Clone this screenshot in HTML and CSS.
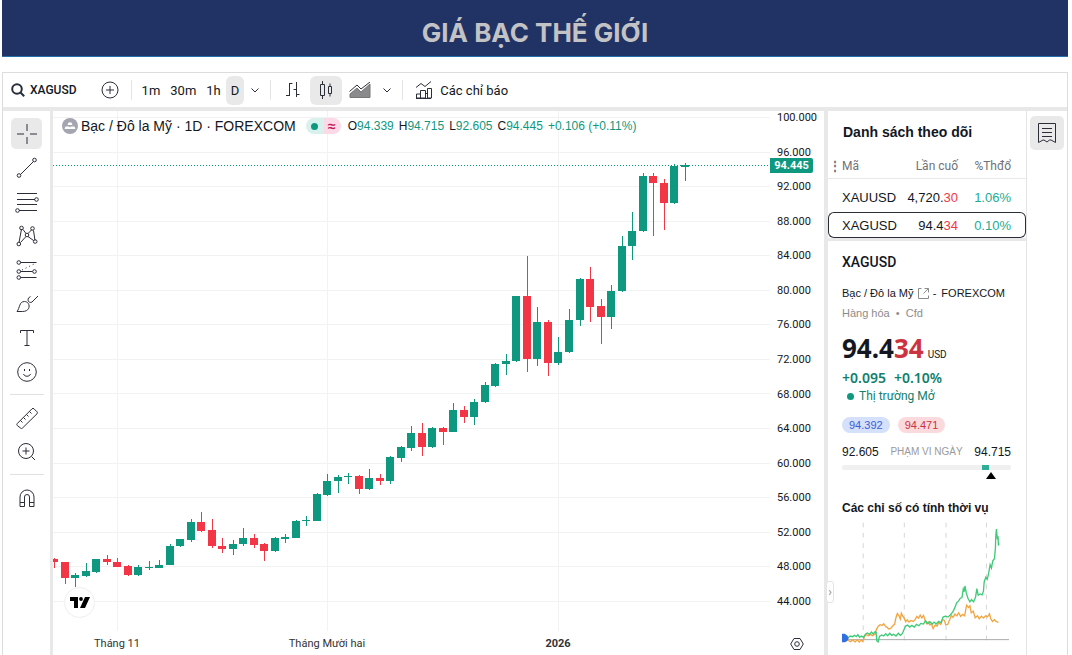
FILE: index.html
```html
<!DOCTYPE html>
<html lang="vi">
<head>
  <meta charset="utf-8">
  <title>Giá bạc thế giới</title>
  <link rel="stylesheet" href="styles.css">
</head>
<body>
  <header class="banner">
    <h1>GIÁ BẠC THẾ GIỚI</h1>
  </header>

  <main class="widget">
    <!-- Top toolbar -->
    <div class="topbar">
      <button class="symbol-btn">
        <svg width="14" height="14" viewBox="0 0 14 14"><circle cx="6" cy="6" r="4.8"/><path d="M9.5 9.5L13.2 13.2"/></svg>
        XAGUSD
      </button>
      <button class="add-btn" aria-label="Thêm mã">
        <svg width="18" height="18" viewBox="0 0 18 18"><circle cx="9" cy="9" r="8"/><path d="M9 5v8M5 9h8"/></svg>
      </button>
      <span class="divider"></span>
      <div class="intervals">
        <button>1m</button>
        <button>30m</button>
        <button>1h</button>
        <button class="active">D</button>
      </div>
      <button class="arrow" aria-label="Khung thời gian">
        <svg width="8" height="5" viewBox="0 0 8 5"><path d="M.5.5L4 4 7.5.5"/></svg>
      </button>
      <span class="divider"></span>
      <div class="styles">
        <button aria-label="Thanh">
          <svg width="15" height="16" viewBox="0 0 15 16"><path d="M4.5 1v13M4.5 1.5h3M1 13.5h3.500M11.500 0v15M8.500 7.500h3M11.500 12.500h3"/></svg>
        </button>
        <button class="active" aria-label="Nến">
          <svg width="14" height="18" viewBox="0 0 14 18"><path d="M1.500 3.500h4v11h-4zM3.500 0v3.500M3.500 14.500V18M9.500 5.500h3v7h-3zM11 2.500v3M11 12.500v3"/></svg>
        </button>
        <button aria-label="Vùng">
          <svg width="22" height="16" viewBox="0 0 22 16">
            <path class="area" d="M1 15.500V12l7-6 4 4 9-8v13.500z"/>
            <path d="M.500 9.500L8 3l4 4 9-7"/>
          </svg>
        </button>
      </div>
      <button class="arrow" aria-label="Kiểu biểu đồ">
        <svg width="8" height="5" viewBox="0 0 8 5"><path d="M.5.5L4 4 7.5.5"/></svg>
      </button>
      <span class="divider"></span>
      <button class="indicator-btn">
        <svg width="18" height="18" viewBox="0 0 18 18"><path d="M1 6.500l5-4 4 3 6-5M1.500 17v-4h4v4zM5.500 17V9.500h5V17zM10.500 12.500h2M12.500 17V7.500h4V17zM1 17.500h15"/></svg>
        Các chỉ báo
      </button>
    </div>

    <div class="workspace">
      <!-- Drawing tools -->
      <div class="tools">
        <button class="active" aria-label="Con trỏ">
          <svg width="22" height="22" viewBox="0 0 22 22"><path d="M11 1v7M11 14v7M1 11h7M14 11h7"/></svg>
        </button>
        <button aria-label="Đường xu hướng">
          <svg width="22" height="22" viewBox="0 0 22 22"><path d="M4.500 17.500l13-13"/><circle cx="3" cy="18.500" r="1.800"/><circle cx="18.500" cy="3" r="1.800"/></svg>
        </button>
        <button aria-label="Fibonacci">
          <svg width="24" height="22" viewBox="0 0 24 22"><path d="M2 2.500h20M2 8.500h18M2 13.500h20M4 19.500h18"/><circle cx="21.500" cy="8.500" r="1.800"/><circle cx="2.500" cy="19.500" r="1.800"/></svg>
        </button>
        <button aria-label="Mẫu hình">
          <svg width="22" height="22" viewBox="0 0 22 22"><path d="M3 17.500L5.500 4M7 4.500l3 4M12 8.500l4-4M17.500 5.500l1.500 10M4.500 17.500l5.500-6M12 11.500l5.500 4"/><circle cx="2.800" cy="19" r="1.800"/><circle cx="5.500" cy="3" r="1.800"/><circle cx="11" cy="10" r="1.800"/><circle cx="16.500" cy="3.500" r="1.800"/><circle cx="19.200" cy="16.500" r="1.800"/></svg>
        </button>
        <button aria-label="Dự báo">
          <svg width="22" height="22" viewBox="0 0 22 22"><path d="M4.500 3.500h16M4.500 12.500h12M4.500 18.500h16"/><path class="dots" d="M6 11L20 4"/><circle cx="2.800" cy="3.500" r="1.800"/><circle cx="2.800" cy="12.500" r="1.800"/><circle cx="18.500" cy="12.500" r="1.800"/><circle cx="2.800" cy="18.500" r="1.800"/></svg>
        </button>
        <button aria-label="Cọ vẽ">
          <svg width="24" height="22" viewBox="0 0 24 22"><path d="M2 18.500C5 15 4 8.500 9.500 8.500c6 0 7 10-2 10zM13.500 5c-1.500 3 1 5.500 3.500 4l6-6M13.500 5l2-1.500"/></svg>
        </button>
        <button aria-label="Văn bản">
          <svg width="22" height="22" viewBox="0 0 22 22"><path d="M4.500 6V3.500h13V6M11 3.500v15M8.500 18.500h5"/></svg>
        </button>
        <button aria-label="Biểu tượng">
          <svg width="22" height="22" viewBox="0 0 22 22"><circle cx="11" cy="11" r="9.300"/><path d="M7.500 13c1 3 6 3 7 0M8.500 8v2M13.500 8v2"/></svg>
        </button>
        <hr>
        <button aria-label="Thước đo">
          <svg width="24" height="24" viewBox="0 0 24 24"><path d="M2.300 17.500L17 2.800q1-1 2 0l3 3q1 1 0 2L7.500 22q-1 1-2 0l-3.200-2.500q-1-1 0-2zM5.500 14.500l2 2M8.500 11.500l2 2M11.500 8.500l2 2M14.500 5.500l2 2"/></svg>
        </button>
        <button aria-label="Phóng to">
          <svg width="22" height="22" viewBox="0 0 22 22"><circle cx="10" cy="10" r="7.500"/><path d="M10 6.500v7M6.500 10h7M15.500 15.500l3.500 3.500"/></svg>
        </button>
        <hr>
        <button aria-label="Nam châm">
          <svg width="22" height="22" viewBox="0 0 22 22"><path d="M4 19.500V10a7 7 0 0 1 14 0v9.500h-4.500V10a2.500 2.500 0 0 0-5 0v9.500zM4 15.500h4.500M13.500 15.500H18"/></svg>
        </button>
      </div>

      <!-- Candle chart -->
      <section class="chart">
        <svg class="plot" id="plot">
          <g id="grid"></g>
          <line class="price-line" x1="0" x2="100%" y1="54.500" y2="54.500"/>
          <g id="candles"></g>
          <text x="64" y="536">Tháng 11</text>
          <text x="274" y="536">Tháng Mười hai</text>
          <text x="505" y="536" class="year">2026</text>
        </svg>
        <div class="axis">
          <div class="axis-prices" id="prices"></div>
          <span class="price-tag">94.445</span>
          <button class="axis-settings" aria-label="Cài đặt">
            <svg width="14" height="14" viewBox="0 0 14 14"><path d="M4 1.500h6L13.300 7 10 12.500H4L.700 7z"/><circle cx="7" cy="7" r="2.300"/></svg>
          </button>
        </div>
        <div class="legend">
          <svg class="coin" width="16" height="16" viewBox="0 0 16 16"><circle class="disc" cx="8" cy="8" r="8"/><path class="bars" d="M5.500 7L6.500 4.500h3l1 2.500zM2.500 11l1-2.500h3.700l.8 1 .8-1h3.700l1 2.500z"/></svg>
          <span class="name">Bạc / Đô la Mỹ · 1D · FOREXCOM</span>
          <span class="status"><i></i><b>≈</b></span>
          <span class="ohlc">
            <span>O<em>94.339</em></span>
            <span>H<em>94.715</em></span>
            <span>L<em>92.605</em></span>
            <span>C<em>94.445</em></span>
            <span><em>+0.106 (+0.11%)</em></span>
          </span>
        </div>
        <a class="tv-logo" href="#" aria-label="TradingView">
          <svg width="20" height="12" viewBox="0 0 20 12"><path d="M0 0h8v11H4V4H0z"/><circle cx="11" cy="2" r="1.900"/><path d="M15 0h5l-5 11h-5z"/></svg>
        </a>
      </section>

      <!-- Watchlist and symbol details -->
      <aside class="side">
        <section class="watchlist">
          <h2>Danh sách theo dõi</h2>
          <table>
            <thead>
              <tr><th><span class="grip">⋮</span>Mã</th><th>Lần cuố</th><th>%Thđổ</th></tr>
            </thead>
            <tbody>
              <tr><td>XAUUSD</td><td>4,720.<span class="down">30</span></td><td class="up">1.06%</td></tr>
              <tr class="selected"><td>XAGUSD</td><td>94.4<span class="down">34</span></td><td class="up">0.10%</td></tr>
            </tbody>
          </table>
        </section>
        <section class="details">
          <h2>XAGUSD</h2>
          <p class="full-name">
            <a href="#">Bạc / Đô la Mỹ
              <svg width="13" height="13" viewBox="0 0 13 13"><path d="M4.500 1.500h-3v10h10v-3M7.500 1.500h4v4M11.500 1.500L6.500 6.500"/></svg>
            </a>
            <span class="dash">-</span> FOREXCOM
          </p>
          <p class="kind">Hàng hóa&nbsp; •&nbsp; Cfd</p>
          <p class="price">94.4<span>34</span><small>USD</small></p>
          <p class="change"><span>+0.095</span><span>+0.10%</span></p>
          <p class="market"><i></i>Thị trường Mở</p>
          <div class="quotes">
            <span class="bid">94.392</span>
            <span class="ask">94.471</span>
          </div>
          <div class="range">
            <span>92.605</span><span class="range-label">PHẠM VI NGÀY</span><span>94.715</span>
          </div>
          <div class="range-bar">
            <div class="range-fill"></div>
            <div class="range-mark"></div>
          </div>
          <h3>Các chỉ số có tính thời vụ</h3>
          <svg class="seasonal" viewBox="66 66 510 390">
            <path class="split" d="M130 68v370M254 68v370M380 68v370M502 68v370"/>
            <path class="base" d="M68 421h502"/>
            <polyline class="last-year" points="72,416 82,422 92,427 98,422 106,428 112,421 118,428 124,423 129,427 134,411 140,406 146,409 152,405 158,409 166,404 170,390 175,381 181,376 187,378 192,373 197,381 202,384 207,389 213,387 219,380 225,374 228,358 233,342 238,349 242,359 245,341 250,351 254,357 258,367 263,361 268,368 274,363 281,366 287,360 292,351 297,356 302,347 307,355 312,348 316,360 321,373 327,368 331,377 336,373 341,388 347,377 353,380 358,370 364,375 369,360 375,363 379,376 385,375 391,361 396,348 401,354 407,344 413,349 418,340 424,351 430,345 436,349 442,317 448,324 452,319 456,340 462,335 468,355 475,349 480,358 487,350 493,356 499,349 505,352 511,343 515,358 520,366 526,361 531,366 538,369"/>
            <polyline class="this-year" points="72,416 83,416 91,410 98,412 104,408 109,412 114,406 119,414 125,410 131,414 137,404 143,401 149,405 155,398 160,404 166,397 169,399 171,425 175,428 179,411 186,407 192,410 198,403 204,409 210,402 216,408 222,405 229,410 236,402 242,408 248,403 253,391 258,380 264,377 270,383 277,378 284,383 291,375 298,379 304,372 312,374 318,364 325,373 331,367 338,374 344,368 350,374 358,366 365,370 371,353 378,350 386,353 393,346 400,338 406,326 412,310 418,304 423,296 428,294 432,268 435,276 437,259 441,280 446,296 452,307 457,300 463,307 469,293 473,267 477,287 483,283 489,286 493,274 495,247 500,233 504,239 508,224 513,195 517,205 521,183 526,177 529,145 530,110 532,87 535,119 537,109 538,137 540,130"/>
            <path class="start" d="M66 403h8q10 4 12 13-2 10-12 13h-8z"/>
          </svg>
        </section>
        <button class="collapse" aria-label="Thu gọn">›</button>
      </aside>

      <nav class="rail">
        <button class="active" aria-label="Danh sách theo dõi">
          <svg width="20" height="22" viewBox="0 0 20 22"><path d="M1.500 1.500h17v19L14 18h-1.500L10 20l-3-2H6l-4.500 2.500zM5 6.500h10M5 10.500h10M5 14.500h10"/></svg>
        </button>
      </nav>
    </div>
  </main>

  <script src="chart.js"></script>
</body>
</html>
```

FILE: styles.css
```css
* {
  box-sizing: border-box;
}
body {
  margin: 0;
  padding: 0 4px 0 2px;
  font-family: "Trebuchet MS", Roboto, sans-serif;
  font-size: 12px;
  color: #131722;
  background-color: #fff;
  min-height: 100vh;
  display: flex;
  flex-direction: column;
}
h1, h2, h3, p {
  margin: 0;
}
button {
  font: inherit;
  color: inherit;
  background: none;
  border: 0;
  padding: 0;
  display: flex;
  align-items: center;
  justify-content: center;
  cursor: pointer;
}
a {
  color: inherit;
  text-decoration: none;
}
svg {
  flex: none;
  fill: none;
  stroke: #2a2e39;
}

/* Banner */
.banner {
  height: 57px;
  padding-top: 9px;
  background-color: #203364;
  border-bottom: 1px solid #2370aa;
  text-align: center;
}
.banner h1 {
  font-family: Inter, sans-serif;
  font-size: 26px;
  line-height: 48px;
  font-weight: 700;
  color: #c3c3c5;
}

/* Widget */
.widget {
  flex: 1;
  margin-top: 15px;
  border: 1px solid #dcdcdc;
  border-bottom: 0;
  display: flex;
  flex-direction: column;
}
.topbar {
  height: 38px;
  padding: 0 8px;
  border-bottom: 4px solid #e8e8e8;
  display: flex;
  align-items: center;
  font-size: 13px;
}
.symbol-btn {
  gap: 5px;
  font-size: 12px;
  font-weight: 500;
}
.symbol-btn svg {
  stroke-width: 2;
}
.add-btn {
  margin: 0 12px 0 24px;
}
.divider {
  width: 1px;
  height: 20px;
  background-color: #e4e4e4;
}
.intervals {
  display: flex;
  margin-left: 5px;
}
.intervals button {
  height: 29px;
  padding: 0 5px;
  border-radius: 6px;
}
.intervals .active, .styles .active {
  background-color: #e9e9e9;
}
.arrow {
  width: 22px;
  height: 29px;
  margin-right: 4px;
}
.styles {
  display: flex;
  margin-left: 5px;
}
.styles button {
  width: 32px;
  height: 29px;
  border-radius: 6px;
}
.styles button + button {
  margin-left: 2px;
}
.styles .area {
  fill: #8a8a8a;
  stroke: #777;
}
.indicator-btn {
  margin-left: 12px;
  gap: 7px;
}

.workspace {
  flex: 1;
  display: flex;
}

/* Drawing tools */
.tools {
  width: 50px;
  border-right: 3px solid #e8e8e8;
  padding-top: 7px;
  display: flex;
  flex-direction: column;
  align-items: center;
  gap: 3px;
}
.tools button, .rail button {
  width: 31px;
  height: 31px;
  border-radius: 5px;
}
.tools .active, .rail .active {
  background-color: #e9e9e9;
}
.tools .dots {
  stroke-dasharray: 1 3;
}
.tools hr {
  width: 34px;
  margin: 4px 0;
  border: 0;
  border-top: 1px solid #e0e0e0;
}

/* Chart */
.chart {
  flex: 1;
  min-width: 0;
  position: relative;
  display: flex;
}
.plot {
  flex: 1;
  height: 544px;
  min-width: 0;
}
.plot text {
  fill: #333;
  stroke: none;
  font-size: 11px;
  text-anchor: middle;
}
.plot .year {
  font-weight: 700;
}
.plot .grid-line {
  stroke: #f2f2f2;
}
.price-line {
  stroke: #089981;
  stroke-dasharray: 1 2;
}
.up-candle {
  fill: #0f9880;
  stroke: none;
}
.down-candle {
  fill: #f23645;
  stroke: none;
}
.axis {
  width: 54px;
  position: relative;
}
.axis-prices {
  height: 498px;
  padding-left: 7px;
  display: flex;
  flex-direction: column;
  justify-content: space-between;
  font-size: 11px;
  line-height: 14px;
}
.price-tag {
  position: absolute;
  left: 0;
  top: 47px;
  width: 43px;
  line-height: 15px;
  border-radius: 0 2px 2px 0;
  background-color: #0f9880;
  color: #fff;
  font-size: 11px;
  font-weight: 700;
  text-align: center;
}
.axis-settings {
  width: 54px;
  height: 14px;
  margin-top: 28px;
}
.legend {
  position: absolute;
  left: 9px;
  top: 6px;
  display: flex;
  align-items: center;
  font-family: "Liberation Sans", Arial, sans-serif;
  line-height: 18px;
  white-space: nowrap;
}
.legend .name {
  margin: 0 10px 0 3px;
  font-size: 14px;
}
.coin .disc {
  fill: #a3a6b0;
  stroke: none;
}
.coin .bars {
  fill: #fff;
  stroke: none;
}
.status {
  width: 35px;
  height: 16px;
  margin-right: 7px;
  border-radius: 8px;
  background: linear-gradient(to right, #d9f1ed 50%, #fbd9e6 50%);
  display: flex;
  align-items: center;
  justify-content: space-around;
}
.status i, .market i {
  width: 7px;
  height: 7px;
  border-radius: 50%;
  background-color: #0f9880;
}
.status b {
  color: #c2185b;
  font-size: 14px;
}
.ohlc {
  display: flex;
  gap: 5px;
}
.ohlc em {
  font-style: normal;
  color: #0f9880;
}
.tv-logo {
  position: absolute;
  left: 11px;
  top: 476px;
  width: 31px;
  height: 31px;
  border: 1px solid #eee;
  border-radius: 50%;
  background-color: #fff;
  display: flex;
  align-items: center;
  justify-content: center;
}
.tv-logo svg {
  fill: #000;
  stroke: none;
}

/* Side panel */
.side {
  width: 203px;
  position: relative;
  border-left: 4px solid #e8e8e8;
  border-right: 1px solid #e4e4e4;
}
.watchlist {
  border-bottom: 3px solid #e8e8e8;
  font-family: "Liberation Sans", Arial, sans-serif;
}
.watchlist h2 {
  padding: 13px 15px 12px;
  font-size: 14px;
  line-height: 17px;
}
.watchlist table {
  width: 100%;
  table-layout: fixed;
  border-spacing: 0;
  font-size: 13px;
}
.watchlist th {
  height: 26px;
  padding: 0;
  border-bottom: 1px solid #e8e8e8;
  font-family: "Trebuchet MS", Roboto, sans-serif;
  font-size: 12px;
  font-weight: 400;
  color: #6f7278;
  text-align: right;
}
.watchlist th:first-child {
  width: 74px;
  text-align: left;
}
.watchlist th:last-child {
  width: 68px;
  padding-right: 15px;
}
.grip {
  display: inline-block;
  width: 14px;
  text-align: center;
  font-weight: 700;
}
.watchlist td {
  height: 26px;
  padding: 0;
  text-align: right;
}
.watchlist td:first-child {
  padding-left: 14px;
  text-align: left;
}
.watchlist td:last-child {
  padding-right: 15px;
}
.watchlist tbody tr:first-child td {
  height: 33px;
  padding-top: 4px;
}
.watchlist .selected td {
  border: 1px solid #2a2e39;
  border-width: 1px 0;
}
.watchlist .selected td:first-child {
  border-left-width: 1px;
  border-radius: 6px 0 0 6px;
  padding-left: 13px;
}
.watchlist .selected td:last-child {
  border-right-width: 1px;
  border-radius: 0 6px 6px 0;
  padding-right: 14px;
}
.watchlist .up {
  color: #22ab94;
}
.watchlist .down {
  color: #f23645;
}

.details {
  padding: 10px 15px 0 14px;
}
.details h2 {
  font-size: 14px;
  line-height: 22px;
  font-weight: 500;
}
.full-name {
  margin-top: 11px;
  font-family: "Liberation Sans", Arial, sans-serif;
  font-size: 11px;
  line-height: 18px;
  white-space: nowrap;
}
.full-name svg {
  vertical-align: -3px;
  stroke: #8c8c8c;
}
.dash {
  margin-right: 2px;
}
.kind {
  font-family: "Liberation Sans", Arial, sans-serif;
  font-size: 11px;
  line-height: 22px;
  color: #8c8c8c;
}
.price {
  margin-top: 10px;
  font-size: 26px;
  line-height: 28px;
  font-family: "Trebuchet MS", "Noto Sans", sans-serif;
  font-weight: 700;
}
.price span {
  color: #cc3340;
}
.price small {
  margin-left: 4px;
  font-family: "Trebuchet MS", Roboto, sans-serif;
  font-size: 10px;
  font-weight: 400;
}
.change {
  display: flex;
  gap: 8px;
  font-family: "Trebuchet MS", "Noto Sans", sans-serif;
  font-size: 14px;
  line-height: 18px;
  font-weight: 600;
  color: #12806c;
}
.market {
  display: flex;
  align-items: center;
  gap: 5px;
  padding-left: 5px;
  line-height: 18px;
  color: #12806c;
}
.quotes {
  display: flex;
  gap: 8px;
  margin-top: 12px;
  font-family: "Liberation Sans", Arial, sans-serif;
  font-size: 11px;
  line-height: 16px;
}
.quotes span {
  padding: 0 7px;
  border-radius: 8px;
}
.bid {
  background-color: #d5e0fb;
  color: #3a5fd8;
}
.ask {
  background-color: #fbdadd;
  color: #cc3340;
}
.range {
  display: flex;
  justify-content: space-between;
  margin-top: 10px;
  font-family: "Liberation Sans", Arial, sans-serif;
  line-height: 18px;
}
.range-label {
  font-size: 10px;
  color: #9a9a9a;
}
.range-bar {
  height: 5px;
  margin-top: 4px;
  position: relative;
  border-radius: 2px;
  background-color: #f0f0f0;
}
.range-fill {
  width: 7px;
  height: 5px;
  margin-left: 83%;
  background-color: #2fae98;
}
.range-mark {
  position: absolute;
  left: 85%;
  top: 7px;
  border: 5px solid transparent;
  border-top: 0;
  border-bottom: 7px solid #000;
}
.details h3 {
  margin-top: 28px;
  font-family: "Liberation Sans", Arial, sans-serif;
  font-size: 12px;
  line-height: 20px;
  white-space: nowrap;
}
.seasonal {
  display: block;
  width: 100%;
  margin-top: 4px;
  stroke-width: 4;
}
.seasonal .split {
  stroke: #d6d6d6;
  stroke-width: 3;
  stroke-dasharray: 14 17;
}
.seasonal .base {
  stroke: #aaa;
  stroke-width: 3;
}
.seasonal .last-year {
  stroke: #f2a540;
}
.seasonal .this-year {
  stroke: #3fca78;
}
.seasonal .start {
  fill: #2f6fe0;
  stroke: none;
}
.collapse {
  position: absolute;
  left: -2px;
  top: 470px;
  width: 8px;
  height: 22px;
  border: 1px solid #e4e4e4;
  border-radius: 3px;
  background-color: #fff;
  color: #8c8c8c;
}

.rail {
  width: 40px;
  padding: 5px 0 0 3px;
}
.rail button {
  width: 34px;
  height: 34px;
}
```

FILE: chart.js
```javascript
// high, body top, body bottom, low, direction (1 = up, 0 = down)
var candles = [
  [447, 448, 451, 457, 0], [451, 451, 467, 473, 0], [462, 464, 467, 476, 1],
  [452, 460, 465, 466, 1], [448, 448, 461, 462, 1], [444, 448, 451, 454, 0],
  [447, 451, 456, 456, 0], [454, 455, 464, 465, 0], [454, 456, 464, 465, 1],
  [450, 456, 457, 459, 1], [449, 454, 457, 457, 1], [433, 435, 454, 454, 1],
  [428, 428, 435, 436, 1], [408, 411, 429, 431, 1], [401, 411, 420, 421, 0],
  [408, 419, 435, 437, 0], [427, 435, 438, 442, 0], [429, 433, 438, 444, 1],
  [417, 427, 433, 435, 1], [423, 427, 434, 437, 0], [432, 433, 440, 450, 0],
  [426, 427, 440, 441, 1], [423, 426, 428, 432, 1], [409, 410, 427, 427, 1],
  [405, 409, 410, 415, 1], [382, 383, 410, 410, 1], [363, 370, 384, 385, 1],
  [364, 366, 370, 382, 1], [362, 365, 366, 373, 1], [364, 365, 378, 383, 0],
  [358, 367, 378, 379, 1], [363, 367, 370, 374, 0], [345, 346, 370, 373, 1],
  [335, 336, 347, 351, 1], [315, 322, 337, 340, 1], [312, 322, 336, 345, 0],
  [316, 317, 336, 337, 1], [316, 317, 321, 334, 0], [292, 299, 321, 321, 1],
  [295, 299, 306, 312, 0], [288, 291, 306, 314, 1], [271, 274, 291, 292, 1],
  [252, 253, 275, 276, 1], [243, 250, 253, 264, 1], [185, 185, 250, 251, 1],
  [145, 185, 248, 261, 0], [196, 211, 248, 255, 1], [209, 211, 252, 265, 0],
  [226, 241, 252, 254, 1], [198, 209, 241, 242, 1], [167, 168, 209, 215, 1],
  [156, 168, 196, 211, 0], [188, 195, 206, 233, 0], [174, 180, 206, 218, 1],
  [125, 135, 180, 181, 1], [101, 120, 135, 149, 1], [62, 65, 120, 121, 1],
  [62, 65, 72, 125, 0], [68, 72, 92, 119, 0], [53, 55, 92, 93, 1],
  [52, 54, 56, 70, 1]
];

var NS = "http://www.w3.org/2000/svg";

function add(parent, tag, attrs) {
  var el = document.createElementNS(NS, tag);
  for (var key in attrs) {
    el.setAttribute(key, attrs[key]);
  }
  parent.appendChild(el);
}

// Grid lines and price labels, from 100 down to 44
var grid = document.getElementById("grid");
var prices = document.getElementById("prices");
for (var p = 100; p >= 44; p -= 4) {
  var y = Math.round((100 - p) * 8.64 + 6) + 0.5;
  add(grid, "line", { "class": "grid-line", x1: 0, x2: "100%", y1: y, y2: y });
  var label = document.createElement("span");
  label.textContent = p.toFixed(3);
  prices.appendChild(label);
}
[64.5, 274.5, 505.5].forEach(function(x) {
  add(grid, "line", { "class": "grid-line", x1: x, x2: x, y1: 0, y2: 520 });
});

// Candles
var group = document.getElementById("candles");
candles.forEach(function(c, i) {
  var x = Math.round(1 + i * 10.51);
  var cls = c[4] ? "up-candle" : "down-candle";
  add(group, "rect", { "class": cls, x: x, y: c[0], width: 1, height: c[3] - c[0] });
  add(group, "rect", { "class": cls, x: x - 4, y: c[1], width: 8, height: c[2] - c[1] });
});
```
